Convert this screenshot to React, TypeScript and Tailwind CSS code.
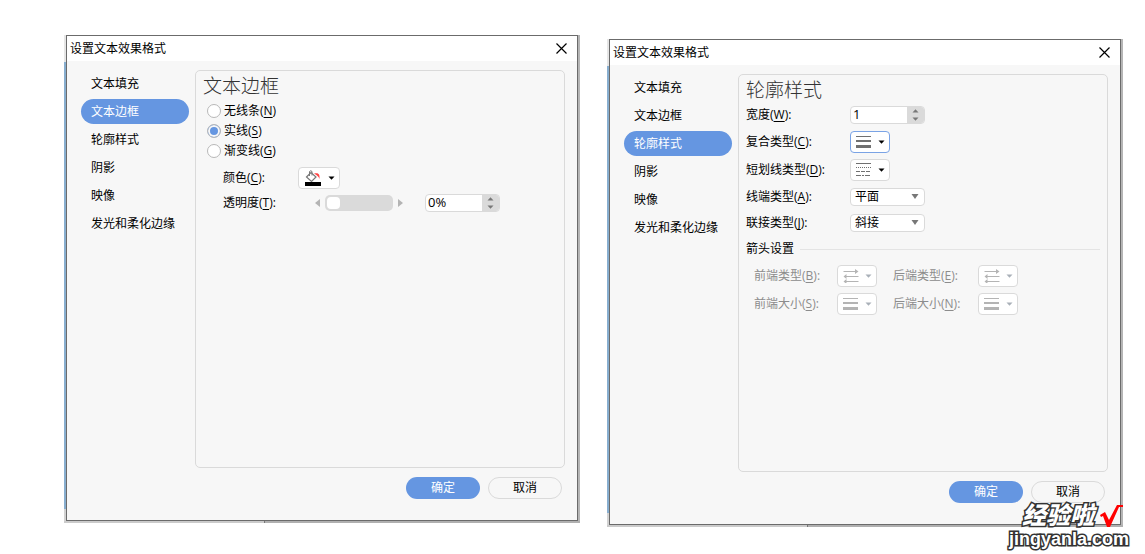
import React from 'react';

interface AccelLabelProps {
  text: string;
  accel: string;
  colon?: boolean;
}

// Label with a keyboard accelerator, e.g. 颜色(C):
const AccelLabel: React.FC<AccelLabelProps> = ({ text, accel, colon = true }) => (
  <>
    {text}(<span className="underline underline-offset-2">{accel}</span>){colon && ':'}
  </>
);

const navItems = ['文本填充', '文本边框', '轮廓样式', '阴影', '映像', '发光和柔化边缘'];

const CaretIcon = ({ className = '' }: { className?: string }) => (
  <svg width="7" height="4" viewBox="0 0 7 4" className={className} aria-hidden="true">
    <path d="M0.5 0.5h6L3.5 3.7z" fill="currentColor" />
  </svg>
);

const SolidLinesIcon = () => (
  <svg width="15" height="14" viewBox="0 0 15 14" shapeRendering="crispEdges" aria-hidden="true">
    <path d="M0 1h15v1H0zM0 5h15v2H0zM0 10h15v3H0z" fill="currentColor" />
  </svg>
);

const DashLinesIcon = () => (
  <svg width="15" height="14" viewBox="0 0 15 14" shapeRendering="crispEdges" stroke="currentColor" aria-hidden="true">
    <path d="M0 0.5h15" />
    <path d="M0 4.5h15" strokeDasharray="1 1" />
    <path d="M0 8.5h15" strokeDasharray="4 1" />
    <path d="M0 12.5h15" strokeDasharray="5 1 2 1" />
  </svg>
);

const ArrowLinesIcon = () => (
  <svg width="16" height="14" viewBox="0 0 16 14" stroke="currentColor" fill="currentColor" aria-hidden="true">
    <path d="M0.500 2.500h12M3 7.500h12.500M3 12.500h12.500" />
    <path d="M12 0v5L15.500 2.500zM3.500 5v5L0.500 7.500zM3.500 10v5L0.500 12.500z" stroke="none" />
  </svg>
);

const FillColorIcon = () => (
  <svg width="16" height="16" viewBox="0 0 16 16" fill="none" aria-hidden="true">
    <path d="M9 3.500c4-1 6 0 5.500 5.500-1-2.500-2.500-3.500-5.500-5.500z" fill="#f44" />
    <path d="M1.500 7L6 2.500l5 4.500-4.500 4.500z" fill="#fff" stroke="#777" strokeWidth="1.200" />
    <path d="M4.500 6V1.500Q5.800 0 7 1.500V5.500" stroke="#777" />
    <path d="M0 12h16v4H0z" fill="#000" />
  </svg>
);

interface MenuButtonProps {
  icon: React.ReactNode;
  label: string;
  focused?: boolean;
  disabled?: boolean;
  wide?: boolean;
}

const MenuButton: React.FC<MenuButtonProps> = ({ icon, label, focused, disabled, wide }) => (
  <button
    type="button"
    aria-label={label}
    disabled={disabled}
    className={`flex h-[22px] shrink-0 items-center justify-between rounded border bg-white pr-1 ${wide ? 'w-[42px] pl-1.5' : 'w-10 pl-[5px]'} ${
      focused ? 'border-[#7aa3e5]' : 'border-[#dadada]'
    } ${disabled ? 'text-[#b4b4b4]' : 'text-[#707070]'}`}
  >
    {icon}
    <CaretIcon className={disabled ? 'text-[#a9b0b8]' : 'text-black'} />
  </button>
);

const SpinBox = ({ id, value }: { id: string; value: string }) => (
  <div className="flex h-[18px] w-[75px] shrink-0 overflow-hidden rounded border border-[#dadada] bg-white">
    <input id={id} type="text" defaultValue={value} className="w-0 min-w-0 flex-1 pl-0.5 text-[13px] text-black outline-none" />
    <div className="flex w-[17px] flex-col items-center justify-center gap-1 bg-[#dadada] text-[#777]">
      <button type="button" aria-label="增加">
        <CaretIcon className="block rotate-180" />
      </button>
      <button type="button" aria-label="减少">
        <CaretIcon className="block" />
      </button>
    </div>
  </div>
);

const SelectBox = ({ id, value }: { id: string; value: string }) => (
  <div className="relative h-[18px] w-[75px] shrink-0">
    <select id={id} defaultValue={value} className="block h-full w-full appearance-none rounded border border-[#dadada] bg-white pl-1 leading-4 text-black outline-none">
      <option>{value}</option>
    </select>
    <svg width="8" height="5" viewBox="0 0 8 5" className="pointer-events-none absolute top-1.5 right-1.5 text-[#777]" aria-hidden="true">
      <path d="M0.500 0h7L4 5z" fill="currentColor" />
    </svg>
  </div>
);

interface DialogProps {
  active: string;
  children: React.ReactNode;
  className?: string;
}

const Dialog: React.FC<DialogProps> = ({ active, children, className = '' }) => (
  <section className={`min-w-0 flex-1 ${className}`}>
    <div className="flex">
      {/* Sliver of the window behind */}
      <div className="flex w-0.5 flex-col">
        <div className="h-[27px] bg-[#e6e6e6]" />
        <div className="flex-1 bg-[#88aecf]" />
        <div className="h-3 bg-[#d2d2d2]" />
      </div>
      <div className="min-w-0 flex-1 border border-[#6b6b6b] bg-[#f7f7f7]">
        <header className="flex h-[25px] items-center justify-between bg-white pr-2.5 pl-[3px]">
          <h2>设置文本效果格式</h2>
          <button type="button" aria-label="关闭">
            <svg width="11" height="11" viewBox="0 0 11 11" className="block" stroke="#000" strokeWidth="1.200" aria-hidden="true">
              <path d="M0.500 0.500l10 10M10.500 0.500l-10 10" />
            </svg>
          </button>
        </header>

        <div className="flex gap-1.5 pt-[9px] pr-3 pl-3.5">
          <nav className="flex w-[108px] shrink-0 flex-col gap-[3px] pt-px">
            {navItems.map((item) => (
              <button
                key={item}
                type="button"
                className={`h-[25px] rounded-full pl-2.5 text-left whitespace-nowrap ${item === active ? 'bg-[#6596e1] text-white' : 'text-black'}`}
              >
                {item}
              </button>
            ))}
          </nav>
          <div className="min-h-[398px] min-w-0 flex-1 rounded-[5px] border border-[#dadada] pt-0.5 pr-[7px] pl-[7px]">
            {children}
          </div>
        </div>

        <footer className="flex justify-end gap-2 pt-[9px] pr-[15px] pb-[21px]">
          <button type="button" className="h-[22px] w-[74px] rounded-full bg-[#6596e1] text-white">
            确定
          </button>
          <button type="button" className="h-[22px] w-[74px] rounded-full border border-[#dadada] text-black">
            取消
          </button>
        </footer>
      </div>
      <div className="w-0.5 bg-[#b5b5b5]" />
    </div>
    <div className="flex h-0.5">
      <div className="w-[200px] bg-[#cbcbcb]" />
      <div className="w-px bg-[#777]" />
      <div className="flex-1 bg-[#b0b0b0]" />
    </div>
  </section>
);

const radios = [
  { text: '无线条', accel: 'N' },
  { text: '实线', accel: 'S' },
  { text: '渐变线', accel: 'G' },
];

const BorderPanel = () => (
  <>
    <h3 className="mb-[3px] h-[25px] text-[19px] leading-[26px] font-light text-[#333]">文本边框</h3>
    <div className="pl-1">
      {radios.map(({ text, accel }) => (
        <label key={accel} className="flex h-5 items-center gap-[3px]">
          <input
            type="radio"
            name="border-line"
            defaultChecked={accel === 'S'}
            className="h-3.5 w-3.5 appearance-none rounded-full border border-[#b8b8b8] bg-white checked:bg-[#6596e1] checked:shadow-[inset_0_0_0_2px_#f7f7f7]"
          />
          <span>
            <AccelLabel text={text} accel={accel} colon={false} />
          </span>
        </label>
      ))}
    </div>
    <div className="mt-[3px] pl-5">
      <div className="flex h-[27px] items-center">
        <span className="w-[75px] shrink-0">
          <AccelLabel text="颜色" accel="C" />
        </span>
        <MenuButton wide label="颜色" icon={<FillColorIcon />} />
      </div>
      <div className="flex h-6 items-center">
        <label htmlFor="opacity" className="w-[92px] shrink-0">
          <AccelLabel text="透明度" accel="T" />
        </label>
        <div className="flex shrink-0 items-center gap-[5px] text-[#b4b4b4]">
          <svg width="5" height="8" viewBox="0 0 5 8" aria-hidden="true">
            <path d="M5 0v8L0 4z" fill="currentColor" />
          </svg>
          <input
            type="range"
            aria-label="透明度"
            defaultValue={0}
            className="h-4 w-[68px] appearance-none rounded-[5px] bg-[#dadada] px-0.5 [&::-webkit-slider-thumb]:h-3 [&::-webkit-slider-thumb]:w-[13px] [&::-webkit-slider-thumb]:appearance-none [&::-webkit-slider-thumb]:rounded [&::-webkit-slider-thumb]:bg-white"
          />
          <svg width="5" height="8" viewBox="0 0 5 8" aria-hidden="true">
            <path d="M0 0v8L5 4z" fill="currentColor" />
          </svg>
        </div>
        <div className="ml-[22px]">
          <SpinBox id="opacity" value="0%" />
        </div>
      </div>
    </div>
  </>
);

const OutlinePanel = () => (
  <>
    <h3 className="h-[25px] text-[19px] leading-[26px] font-light text-[#333]">轮廓样式</h3>
    <div className="grid grid-cols-[104px_1fr] grid-rows-[26px_28px_28px_26px_26px] items-center">
      <label htmlFor="line-width">
        <AccelLabel text="宽度" accel="W" />
      </label>
      <SpinBox id="line-width" value="1" />
      <span>
        <AccelLabel text="复合类型" accel="C" />
      </span>
      <MenuButton focused label="复合类型" icon={<SolidLinesIcon />} />
      <span>
        <AccelLabel text="短划线类型" accel="D" />
      </span>
      <MenuButton label="短划线类型" icon={<DashLinesIcon />} />
      <label htmlFor="cap-type">
        <AccelLabel text="线端类型" accel="A" />
      </label>
      <SelectBox id="cap-type" value="平面" />
      <label htmlFor="join-type">
        <AccelLabel text="联接类型" accel="J" />
      </label>
      <SelectBox id="join-type" value="斜接" />
    </div>

    {/* Arrow settings */}
    <div className="flex h-[26px] items-center gap-1.5">
      <span>箭头设置</span>
      <div className="h-px flex-1 bg-[#e4e4e4]" />
    </div>
    <div className="grid grid-cols-[83px_56px_85px_40px] grid-rows-[28px_28px] items-center pl-2 text-[#8c8c8c]">
      <span>
        <AccelLabel text="前端类型" accel="B" />
      </span>
      <MenuButton disabled label="前端类型" icon={<ArrowLinesIcon />} />
      <span>
        <AccelLabel text="后端类型" accel="E" />
      </span>
      <MenuButton disabled label="后端类型" icon={<ArrowLinesIcon />} />
      <span>
        <AccelLabel text="前端大小" accel="S" />
      </span>
      <MenuButton disabled label="前端大小" icon={<SolidLinesIcon />} />
      <span>
        <AccelLabel text="后端大小" accel="N" />
      </span>
      <MenuButton disabled label="后端大小" icon={<SolidLinesIcon />} />
    </div>
  </>
);

const Watermark = () => (
  <div className="absolute right-4 bottom-1 flex flex-col items-end font-['Liberation_Sans','Noto_Sans_CJK_SC',sans-serif] font-bold text-white [-webkit-text-stroke:3px_#333] [paint-order:stroke_fill]">
    <div className="flex items-center gap-1.5 pr-1.5">
      <span className="text-[24px] leading-6 font-black italic">经验啦</span>
      <svg width="23" height="23" viewBox="0 0 23 23" aria-hidden="true">
        <path d="M0 10l5-3 4 8L17 0h6v2h-4L10 22H7L3 11l-2 1z" fill="#f00" />
      </svg>
    </div>
    <span className="text-[18px] leading-[22px]">jingyanla.com</span>
  </div>
);

const App = () => (
  <main className="relative flex min-h-screen items-start gap-[27px] bg-white pt-[35px] pr-[22px] pl-16 font-['Open_Sans','Noto_Sans_CJK_SC',sans-serif] text-xs text-black">
    <Dialog active="文本边框">
      <BorderPanel />
    </Dialog>
    <Dialog active="轮廓样式" className="mt-1">
      <OutlinePanel />
    </Dialog>
    <Watermark />
  </main>
);

export default App;
